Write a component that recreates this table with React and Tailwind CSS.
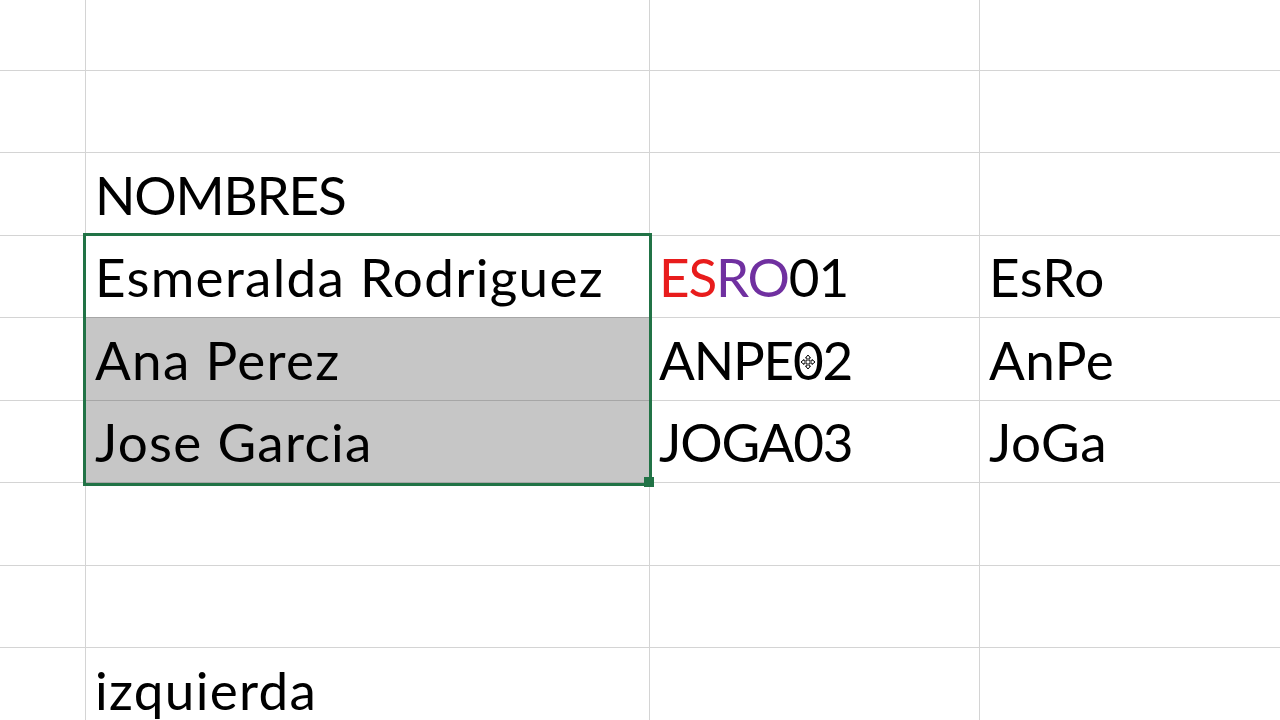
import React from "react";

const rows = [
  { h: "h-[71px]", b: "", c: "", d: "" },
  { h: "h-[82px]", b: "", c: "", d: "" },
  { h: "h-[83px]", b: "NOMBRES", c: "", d: "" },
  { h: "h-[82px]", b: "Esmeralda Rodriguez", c: "code", d: "EsRo" },
  { h: "h-[83px]", b: "Ana Perez", c: "ANPE02", d: "AnPe", grey: true },
  { h: "h-[82px]", b: "Jose Garcia", c: "JOGA03", d: "JoGa", grey: true },
  { h: "h-[83px]", b: "", c: "", d: "" },
  { h: "h-[82px]", b: "", c: "", d: "" },
  { h: "h-[83px]", b: "izquierda", c: "", d: "" },
];

// caps read a bit narrower, mixed case a bit wider than Lato gives
const track = (t) =>
  t && t === t.toUpperCase() ? "tracking-[-1.2px]" : "tracking-[1.3px]";

function Cell({ children, className = "" }) {
  return (
    <div
      className={`flex items-end overflow-visible whitespace-nowrap border-r border-b border-[#d4d4d4] pb-[14px] text-[53px] leading-none text-black ${className}`}
    >
      {children}
    </div>
  );
}

function MoveCursor() {
  return (
    <svg
      className="absolute left-[800px] top-[354px]"
      width="16"
      height="16"
      viewBox="0 0 16 16"
    >
      <path
        d="M8 1 L10.5 4 H9 V7 H12 V5.5 L15 8 L12 10.5 V9 H9 V12 H10.5 L8 15 L5.5 12 H7 V9 H4 V10.5 L1 8 L4 5.5 V7 H7 V4 H5.5 Z"
        fill="#fff"
        stroke="#000"
        strokeWidth="1"
      />
    </svg>
  );
}

export default function App() {
  return (
    <div
      className="relative h-[720px] w-[1280px] overflow-hidden bg-white"
      style={{ fontFamily: "Lato, 'Liberation Sans', sans-serif" }}
    >
      <div className="grid grid-cols-[86px_564px_330px_1fr]">
        {rows.map((r, i) => (
          <React.Fragment key={i}>
            <div className={`${r.h} border-r border-b border-[#d4d4d4]`} />
            <Cell
              className={`pl-[9px] ${track(r.b)} ${
                r.grey ? "bg-[#c6c6c6] border-b-[#a6a6a6]" : i === 3 ? "border-b-[#a6a6a6]" : ""
              }`}
            >
              {r.b}
            </Cell>
            <Cell className="pl-[9px] tracking-[-1.2px]">
              {r.c === "code" ? (
                <>
                  <span className="text-[#e81c1c]">ES</span>
                  <span className="text-[#7030a0]">RO</span>
                  <span>01</span>
                </>
              ) : (
                r.c
              )}
            </Cell>
            <Cell className={`pl-[9px] border-r-0 ${r.d ? "tracking-[0.5px]" : ""}`}>{r.d}</Cell>
          </React.Fragment>
        ))}
      </div>

      {/* selection box */}
      <div className="pointer-events-none absolute left-[83px] top-[233px] h-[253px] w-[569px] border-[3px] border-[#217346]" />
      <div className="absolute left-[644px] top-[477px] h-[10px] w-[10px] bg-[#217346]" />

      <MoveCursor />
    </div>
  );
}
